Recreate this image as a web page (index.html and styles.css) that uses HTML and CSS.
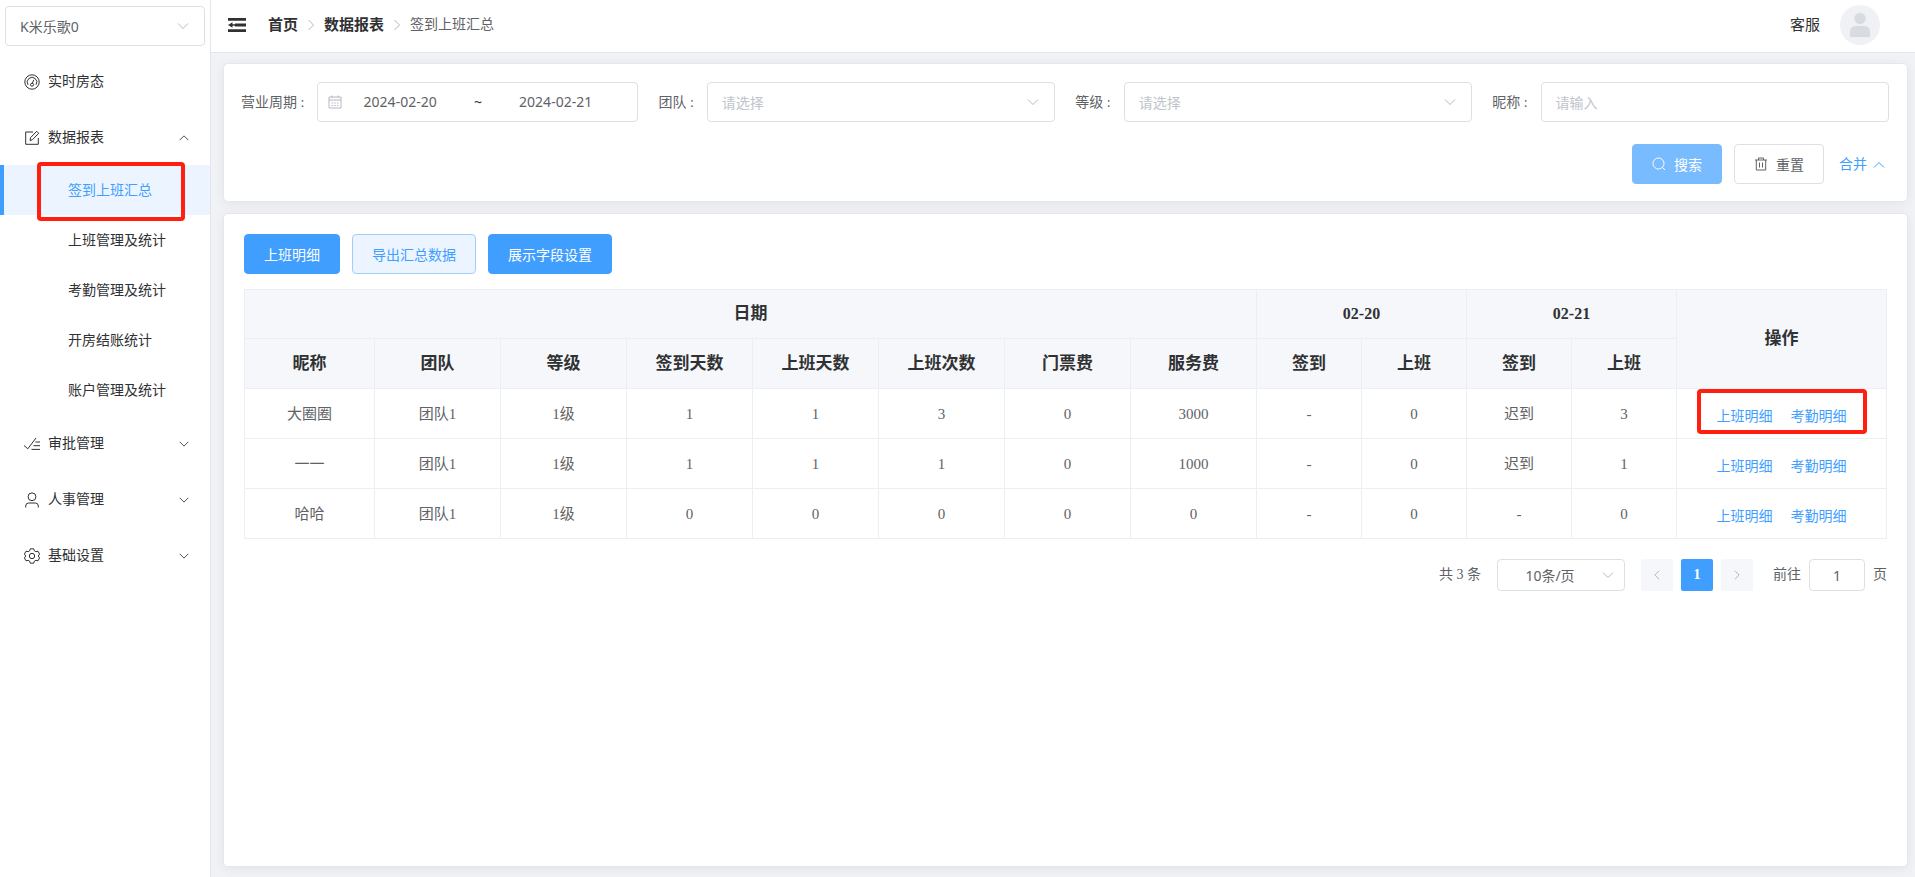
FILE: index.html
```html
<!DOCTYPE html>
<html lang="zh-CN">
<head>
<meta charset="utf-8">
<title>签到上班汇总</title>
<link rel="stylesheet" href="styles.css">
</head>
<body>
<svg class="sprite" aria-hidden="true">
  <symbol id="down" viewBox="0 0 14 14"><path d="M2 4.5l5 5 5-5"/></symbol>
  <symbol id="up" viewBox="0 0 14 14"><path d="M2 9.5l5-5 5 5"/></symbol>
  <symbol id="right" viewBox="0 0 14 14"><path d="M4.5 2l5 5-5 5"/></symbol>
  <symbol id="left" viewBox="0 0 14 14"><path d="M9.5 2l-5 5 5 5"/></symbol>
</svg>
<div class="app">
  <aside class="sidebar">
    <div class="field store">
      <select class="control" aria-label="门店"><option>K米乐歌0</option></select>
      <svg class="caret"><use href="#down"/></svg>
    </div>
    <nav class="menu">
      <a class="menu-item" href="#">
        <svg class="menu-icon" viewBox="0 0 16 16"><circle cx="8" cy="8" r="7.2"/><path d="M4 10.8A4.8 4.8 0 1 1 12 10.8M8.3 9.2L9.8 5.8"/><circle cx="8" cy="10.7" r="1.5"/></svg>
        <span>实时房态</span>
      </a>
      <a class="menu-item" href="#">
        <svg class="menu-icon" viewBox="0 0 16 16"><path d="M9 2H1.7v12.3h12.6V8M6 10.5l.5-2.8L12.7 1.300l2 2L8.500 9.700z"/></svg>
        <span>数据报表</span>
        <svg class="menu-arrow"><use href="#up"/></svg>
      </a>
      <div class="submenu">
        <a class="sub-item active" href="#" aria-current="page">签到上班汇总<span class="mark mark-menu"></span></a>
        <a class="sub-item" href="#">上班管理及统计</a>
        <a class="sub-item" href="#">考勤管理及统计</a>
        <a class="sub-item" href="#">开房结账统计</a>
        <a class="sub-item" href="#">账户管理及统计</a>
      </div>
      <a class="menu-item" href="#">
        <svg class="menu-icon" viewBox="0 0 16 16"><path d="M0 9.500l3.800 3.300L12 2M11.500 6H16M9.500 9.700H16M7.500 13.400H16"/></svg>
        <span>审批管理</span>
        <svg class="menu-arrow"><use href="#down"/></svg>
      </a>
      <a class="menu-item" href="#">
        <svg class="menu-icon" viewBox="0 0 16 16"><circle cx="8" cy="4.800" r="3.900"/><path d="M1.700 15.500v-1.500q0-3 3-3h6.600q3 0 3 3v1.500"/></svg>
        <span>人事管理</span>
        <svg class="menu-arrow"><use href="#down"/></svg>
      </a>
      <a class="menu-item" href="#">
        <svg class="menu-icon" viewBox="0 0 16 16"><path d="M6.300.8h3.400l.7 2.100 1.500.8 2.100-.5 1.600 2.900L14.200 8l1.400 1.900-1.600 2.900-2.100-.5-1.500.8-.7 2.100H6.300l-.7-2.100-1.500-.8-2.100.5L.4 9.900 1.800 8 .4 6.100 2 3.200l2.100.5 1.500-.8z"/><circle cx="8" cy="8" r="2.700"/></svg>
        <span>基础设置</span>
        <svg class="menu-arrow"><use href="#down"/></svg>
      </a>
    </nav>
  </aside>

  <div class="page">
    <header class="topbar">
      <button class="fold" type="button" aria-label="收起菜单">
        <svg viewBox="0 0 18 14"><path d="M0 0h18v2.800H0zM7 5.600h11v2.800H7zM0 11.200h18V14H0zM0 7l4.500-2.800v5.600zM4 6.300h3v1.400H4z"/></svg>
      </button>
      <nav class="crumbs">
        <a href="#">首页</a>
        <svg class="crumb-sep"><use href="#right"/></svg>
        <a href="#">数据报表</a>
        <svg class="crumb-sep"><use href="#right"/></svg>
        <span>签到上班汇总</span>
      </nav>
      <a class="service" href="#">客服</a>
      <svg class="avatar" viewBox="0 0 40 40"><circle cx="20" cy="20" r="20" fill="#eff1f5"/><circle cx="20" cy="13.500" r="5.700" fill="#d8dce1"/><path d="M10 32v-5q0-6 6-6h8q6 0 6 6v5z" fill="#d8dce1"/></svg>
    </header>

    <main class="content">
      <form class="card filters">
        <div class="filter-row">
          <div class="filter-item period">
            <label for="from">营业周期 :</label>
            <div class="control range">
              <svg class="calendar" viewBox="0 0 14 14"><path d="M1 2h12v11H1zM1 5h12M4 .500v2.500M10 .500v2.500M3.500 8h1.500M6.300 8h1.500M9 8h1.500M3.500 10.500h1.500M6.300 10.500h1.500M9 10.500h1.500"/></svg>
              <input id="from" type="text" value="2024-02-20">
              <span>~</span>
              <input type="text" value="2024-02-21" aria-label="结束日期">
            </div>
          </div>
          <div class="filter-item">
            <label for="team">团队 :</label>
            <div class="field">
              <select id="team" class="control empty"><option>请选择</option></select>
              <svg class="caret"><use href="#down"/></svg>
            </div>
          </div>
          <div class="filter-item">
            <label for="level">等级 :</label>
            <div class="field">
              <select id="level" class="control empty"><option>请选择</option></select>
              <svg class="caret"><use href="#down"/></svg>
            </div>
          </div>
          <div class="filter-item">
            <label for="nick">昵称 :</label>
            <div class="field"><input id="nick" class="control" type="text" placeholder="请输入"></div>
          </div>
        </div>
        <div class="filter-actions">
          <button class="btn search" type="button"><svg class="btn-icon" viewBox="0 0 14 14"><circle cx="6.500" cy="6.500" r="5.500"/><path d="M10.500 10.500l2.500 2.500"/></svg>搜索</button>
          <button class="btn" type="button"><svg class="btn-icon" viewBox="0 0 14 14"><path d="M1 3h12M4.500 3V1h5v2M2.300 3v10h9.400V3M5.500 5.500v5M8.500 5.500v5"/></svg>重置</button>
          <a class="collapse" href="#">合并<svg><use href="#up"/></svg></a>
        </div>
      </form>

      <section class="card report">
        <div class="toolbar">
          <button class="btn primary" type="button">上班明细</button>
          <button class="btn plain" type="button">导出汇总数据</button>
          <button class="btn primary" type="button">展示字段设置</button>
        </div>
        <table class="grid">
          <colgroup>
            <col class="c-name"><col class="c-stat" span="7"><col class="c-day" span="4"><col class="c-ops">
          </colgroup>
          <thead>
            <tr class="groups"><th colspan="8">日期</th><th class="date" colspan="2">02-20</th><th class="date" colspan="2">02-21</th><th rowspan="2">操作</th></tr>
            <tr><th>昵称</th><th>团队</th><th>等级</th><th>签到天数</th><th>上班天数</th><th>上班次数</th><th>门票费</th><th>服务费</th><th>签到</th><th>上班</th><th>签到</th><th>上班</th></tr>
          </thead>
          <tbody>
            <tr><td>大圈圈</td><td>团队1</td><td>1级</td><td>1</td><td>1</td><td>3</td><td>0</td><td>3000</td><td>-</td><td>0</td><td>迟到</td><td>3</td><td class="ops"><a href="#">上班明细</a><a href="#">考勤明细</a><span class="mark mark-ops"></span></td></tr>
            <tr><td>一一</td><td>团队1</td><td>1级</td><td>1</td><td>1</td><td>1</td><td>0</td><td>1000</td><td>-</td><td>0</td><td>迟到</td><td>1</td><td class="ops"><a href="#">上班明细</a><a href="#">考勤明细</a></td></tr>
            <tr><td>哈哈</td><td>团队1</td><td>1级</td><td>0</td><td>0</td><td>0</td><td>0</td><td>0</td><td>-</td><td>0</td><td>-</td><td>0</td><td class="ops"><a href="#">上班明细</a><a href="#">考勤明细</a></td></tr>
          </tbody>
        </table>
        <div class="pager">
          <span>共 3 条</span>
          <div class="field size">
            <select class="control" aria-label="每页条数"><option>10条/页</option></select>
            <svg class="caret"><use href="#down"/></svg>
          </div>
          <div class="pages">
            <button type="button" aria-label="上一页" disabled><svg><use href="#left"/></svg></button>
            <button type="button" class="current">1</button>
            <button type="button" aria-label="下一页" disabled><svg><use href="#right"/></svg></button>
          </div>
          <div class="jump">
            <label for="jump">前往</label>
            <input id="jump" class="control" type="text" value="1">
            <span>页</span>
          </div>
        </div>
      </section>
    </main>
  </div>
</div>
</body>
</html>
```

FILE: styles.css
```css
* { box-sizing: border-box; }

body {
  margin: 0;
  font-family: "Liberation Serif", "Noto Sans CJK SC", serif;
  font-size: 14px;
  line-height: 20px;
  color: #303133;
}

a { color: inherit; text-decoration: none; }

svg { width: 14px; height: 14px; flex: none; fill: none; stroke: currentColor; stroke-width: 1; }
.sprite { position: absolute; width: 0; height: 0; }

.app { display: flex; min-height: 100vh; }

.sidebar { flex: none; width: 211px; border-right: 1px solid #e2e5ee; background: #fff; }

/* form controls */
.field { display: grid; align-items: center; flex: 1; min-width: 0; }
.field > * { grid-area: 1 / 1; }
.control {
  width: 100%;
  height: 40px;
  padding: 0 14px;
  border: 1px solid #dcdfe6;
  border-radius: 4px;
  background: #fff;
  color: #606266;
  font-family: "Noto Sans", "Noto Sans CJK SC", sans-serif;
  font-size: 14px;
  appearance: none;
}
.control.empty { color: #c0c4cc; }
.control::placeholder { color: #c0c4cc; opacity: 1; }
.caret { justify-self: end; margin-right: 15px; color: #b4b8c0; pointer-events: none; }

/* sidebar */
.store { margin: 6px 5px 7px; }
.menu-item { display: flex; align-items: center; height: 56px; padding: 1px 20px 0 24px; }
.menu-icon { width: 16px; height: 16px; margin-right: 8px; color: #303133; overflow: visible; }
.menu-arrow { width: 12px; height: 12px; margin-left: auto; color: #303133; }
.sub-item { position: relative; display: flex; align-items: center; height: 50px; padding: 2px 0 0 68px; }
.sub-item.active { padding-left: 64px; border-left: 4px solid #409eff; background: #ecf5ff; color: #409eff; }

/* highlight frames */
.mark { position: absolute; border: 4px solid #ff1e10; border-radius: 4px; pointer-events: none; }
.mark-menu { z-index: 1; inset: -3px 25px -6px 33px; }
.mark-ops { inset: 0 19px 4px 20px; }

/* top bar */
.page { display: flex; flex: 1; flex-direction: column; min-width: 0; }
.topbar { display: flex; align-items: center; height: 53px; padding: 0 35px 2px 17px; border-bottom: 1px solid #e2e5ee; background: #fff; }
.fold { display: flex; margin-right: 22px; padding: 0; border: 0; background: none; color: #303133; }
.fold svg { width: 18px; height: 14px; fill: currentColor; stroke: none; }
.crumbs { display: flex; align-items: center; color: #606266; }
.crumbs a { color: #303133; font-size: 15px; font-weight: 700; }
.crumb-sep { margin: 0 6px; color: #b4b8c0; }
.service { margin: 0 20px 0 auto; font-size: 15px; }
.avatar { width: 40px; height: 40px; stroke: none; }

/* cards */
.content { display: flex; flex: 1; flex-direction: column; gap: 11px; padding: 10px 7px 10px 12px; background: #f0f2f5; }
.card { border: 1px solid #e4e7ed; border-radius: 5px; background: #fff; box-shadow: 0 2px 12px rgba(0, 0, 0, 0.06); }

.filters { padding: 18px 18px 17px 17px; }
.filter-row { display: flex; gap: 20px; }
.filter-item { display: flex; flex: 1 1 0; align-items: center; color: #606266; }
.filter-item label { flex: none; padding: 2px 13px 0 0; }
.filter-item.period { flex: none; }
.range { display: flex; align-items: center; width: 321px; padding: 0 24px 0 10px; }
.calendar { color: #b4b8c0; }
.range input { flex: 1; width: 0; min-width: 0; padding: 0; border: 0; background: none; color: inherit; font: inherit; text-align: center; }
.range span { width: 40px; color: #303133; text-align: center; }
.filter-actions { display: flex; align-items: center; justify-content: flex-end; gap: 12px; margin-top: 22px; }

.btn {
  display: inline-flex;
  align-items: center;
  height: 40px;
  padding: 0 19px;
  border: 1px solid #dcdfe6;
  border-radius: 4px;
  background: #fff;
  color: #606266;
  font-family: "Noto Sans", "Noto Sans CJK SC", sans-serif;
  font-size: 14px;
}
.btn-icon { margin-right: 8px; }
.btn.primary { border-color: #409eff; background: #409eff; color: #fff; }
.btn.plain { border-color: #a0cfff; background: #ecf5ff; color: #409eff; }
.btn.search { border-color: #79bbff; background: #79bbff; color: #fff; }
.collapse { display: flex; align-items: center; gap: 5px; padding: 2px 3px 0; color: #409eff; }

/* report table */
.report { flex: 1; padding: 20px; }
.toolbar { display: flex; gap: 12px; margin-bottom: 15px; }
.grid { width: 100%; border-collapse: collapse; table-layout: fixed; color: #606266; font-size: 15px; }
.c-name { width: 130px; }
.c-stat { width: 126px; }
.c-day { width: 105px; }
.c-ops { width: 210px; }
.grid th, .grid td { height: 50px; padding: 0; border: 1px solid #ebeef5; text-align: center; }
.grid th { background: #f5f7fa; color: #303133; font-size: 17px; }
.grid .groups th { height: 49px; }
.grid th.date { font-size: 16px; }
.grid .ops { position: relative; padding-top: 6px; color: #409eff; font-size: 14px; }
.ops a + a { margin-left: 18px; }

/* pagination */
.pager { display: flex; align-items: center; justify-content: flex-end; gap: 16px; margin-top: 20px; color: #606266; }
.pager .control { height: 32px; }
.size { flex: none; width: 128px; }
.size .control { padding: 0 32px 0 10px; text-align-last: center; }
.size .caret { margin-right: 10px; }
.pages { display: flex; gap: 8px; }
.pages button {
  display: flex;
  align-items: center;
  justify-content: center;
  width: 32px;
  height: 32px;
  padding: 0;
  border: 0;
  border-radius: 2px;
  background: #f5f7fa;
  color: #a8abb2;
  font: 700 14px "Liberation Serif", serif;
}
.pages .current { background: #409eff; color: #fff; }
.pages svg { width: 12px; height: 12px; }
.jump { display: flex; align-items: center; gap: 8px; margin-left: 4px; }
.jump .control { width: 56px; text-align: center; }
```
